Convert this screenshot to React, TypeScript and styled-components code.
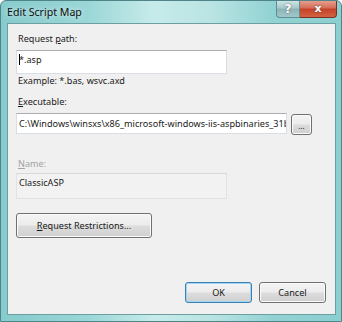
import React from "react";
import styled, { createGlobalStyle } from "styled-components";

const Global = createGlobalStyle`
  html, body { margin: 0; padding: 0; background: #ffffff; }
  body { font-family: "Noto Sans", "Open Sans", sans-serif; }
  * { box-sizing: border-box; }
`;

const Window = styled.div`
  width: 342px;
  height: 322px;
  display: flex;
  flex-direction: column;
  background: linear-gradient(90deg, #86cbcd 0%, #9ad6d6 25%, #c6ebea 45%, #b9e4e3 62%, #92d2d3 80%, #8ccfd1 100%);
  border: 1px solid #4f8488;
  border-radius: 6px 6px 0 0;
  padding: 0 5px 6px 6px;
  overflow: hidden;
`;

const TitleBar = styled.div`
  height: 22px;
  display: flex;
  align-items: flex-start;
  justify-content: space-between;
`;

const Title = styled.div`
  font-size: 10.6px;
  color: #101010;
  padding-top: 4px;
  text-shadow: 0 0 6px rgba(255, 255, 255, 0.9);
`;

const Caption = styled.div`
  display: flex;
  margin-top: -1px;
  margin-right: -1px;
`;

const CapButton = styled.div<{ $close?: boolean }>`
  width: ${(p) => (p.$close ? "37px" : "24px")};
  height: 18px;
  display: flex;
  align-items: center;
  justify-content: center;
  border: 1px solid ${(p) => (p.$close ? "#7a2f26" : "#5f8d90")};
  border-top: none;
  border-left-width: ${(p) => (p.$close ? "0" : "1px")};
  border-radius: ${(p) => (p.$close ? "0 0 4px 0" : "0 0 0 4px")};
  background: ${(p) =>
    p.$close
      ? "linear-gradient(180deg, #e9a493 0%, #d4705c 45%, #c6412a 55%, #d2643f 100%)"
      : "linear-gradient(180deg, #d4e9ea 0%, #a9c9cb 45%, #8db5b8 55%, #a2c8ca 100%)"};
  color: #ffffff;
  font-family: "DejaVu Sans", sans-serif;
  font-weight: bold;
  font-size: ${(p) => (p.$close ? "11px" : "12px")};
  text-shadow: 0 0 2px rgba(60, 60, 60, 0.8);
`;

const Client = styled.div`
  flex: 1;
  background: #f0f0f0;
  border: 1px solid #6d9fa2;
  display: flex;
  flex-direction: column;
  padding: 9px 9px 11px 8px;
  color: #1a1a1a;
  font-size: 9.1px;
`;

const Label = styled.div<{ $disabled?: boolean }>`
  height: 12px;
  line-height: 12px;
  padding-left: 2px;
  color: ${(p) => (p.$disabled ? "#a3a3a3" : "#1a1a1a")};
  margin-bottom: ${(p) => (p.$disabled ? "3px" : "5px")};
`;

const U = styled.span`
  text-decoration: underline;
  text-underline-offset: 1px;
`;

const TextBox = styled.div<{ $w: number; $h: number; $disabled?: boolean }>`
  width: ${(p) => p.$w}px;
  height: ${(p) => p.$h}px;
  background: ${(p) => (p.$disabled ? "#f2f2f2" : "#ffffff")};
  border: 1px solid ${(p) => (p.$disabled ? "#dfe3e6" : "#d9dee4")};
  border-top-color: ${(p) => (p.$disabled ? "#d6dadd" : "#abadb3")};
  padding: ${(p) => (p.$h > 23 ? "3px 2px 0" : "0 2px")};
  display: flex;
  align-items: ${(p) => (p.$h > 23 ? "flex-start" : "center")};
  line-height: 12px;
  white-space: nowrap;
  overflow: hidden;
  color: #1a1a1a;
`;

const Caret = styled.span`
  display: inline-block;
  width: 1px;
  height: 11px;
  background: #000;
  margin-right: -1px;
  vertical-align: top;
`;

const Hint = styled.div`
  height: 12px;
  line-height: 12px;
  padding-left: 2px;
  margin-top: 1px;
  margin-bottom: 9px;
`;

const Row = styled.div`
  display: flex;
  align-items: flex-start;
  gap: 4px;
  margin-bottom: 23px;
`;

const Button = styled.div<{ $w: number; $h: number; $default?: boolean }>`
  width: ${(p) => p.$w}px;
  height: ${(p) => p.$h}px;
  display: flex;
  align-items: center;
  justify-content: center;
  border: 1px solid ${(p) => (p.$default ? "#3c7fb1" : "#707070")};
  border-radius: 3px;
  background: linear-gradient(180deg, #f4f4f4 0%, #ececec 48%, #dddddd 52%, #cfcfcf 100%);
  box-shadow: inset 0 0 0 1px ${(p) => (p.$default ? "#9ed6f3" : "#fbfbfb")};
  color: #1a1a1a;
  line-height: 12px;
`;

const Dots = styled(Button)`
  margin-top: 1px;
  font-size: 8px;
  padding-top: 2px;
`;

const Restrictions = styled(Button)`
  margin-top: 14px;
`;

const Footer = styled.div`
  margin-top: auto;
  display: flex;
  justify-content: flex-end;
  gap: 7px;
`;

export default function App() {
  return (
    <>
      <Global />
      <Window>
        <TitleBar>
          <Title>Edit Script Map</Title>
          <Caption>
            <CapButton>?</CapButton>
            <CapButton $close>x</CapButton>
          </Caption>
        </TitleBar>
        <Client>
          <Label>
            Request <U>p</U>ath:
          </Label>
          <TextBox $w={211} $h={24}>
            <span>
              <Caret />*.asp
            </span>
          </TextBox>
          <Hint>Example: *.bas, wsvc.axd</Hint>
          <Label>
            <U>E</U>xecutable:
          </Label>
          <Row>
            <TextBox $w={271} $h={21}>
              C:\Windows\winsxs\x86_microsoft-windows-iis-aspbinaries_31b
            </TextBox>
            <Dots $w={21} $h={21}>...</Dots>
          </Row>
          <Label $disabled>
            <U>N</U>ame:
          </Label>
          <TextBox $w={211} $h={26} $disabled>
            ClassicASP
          </TextBox>
          <Restrictions $w={136} $h={25}>
            <span>
              <U>R</U>equest Restrictions...
            </span>
          </Restrictions>
          <Footer>
            <Button $w={67} $h={21} $default>
              OK
            </Button>
            <Button $w={67} $h={21}>
              Cancel
            </Button>
          </Footer>
        </Client>
      </Window>
    </>
  );
}
